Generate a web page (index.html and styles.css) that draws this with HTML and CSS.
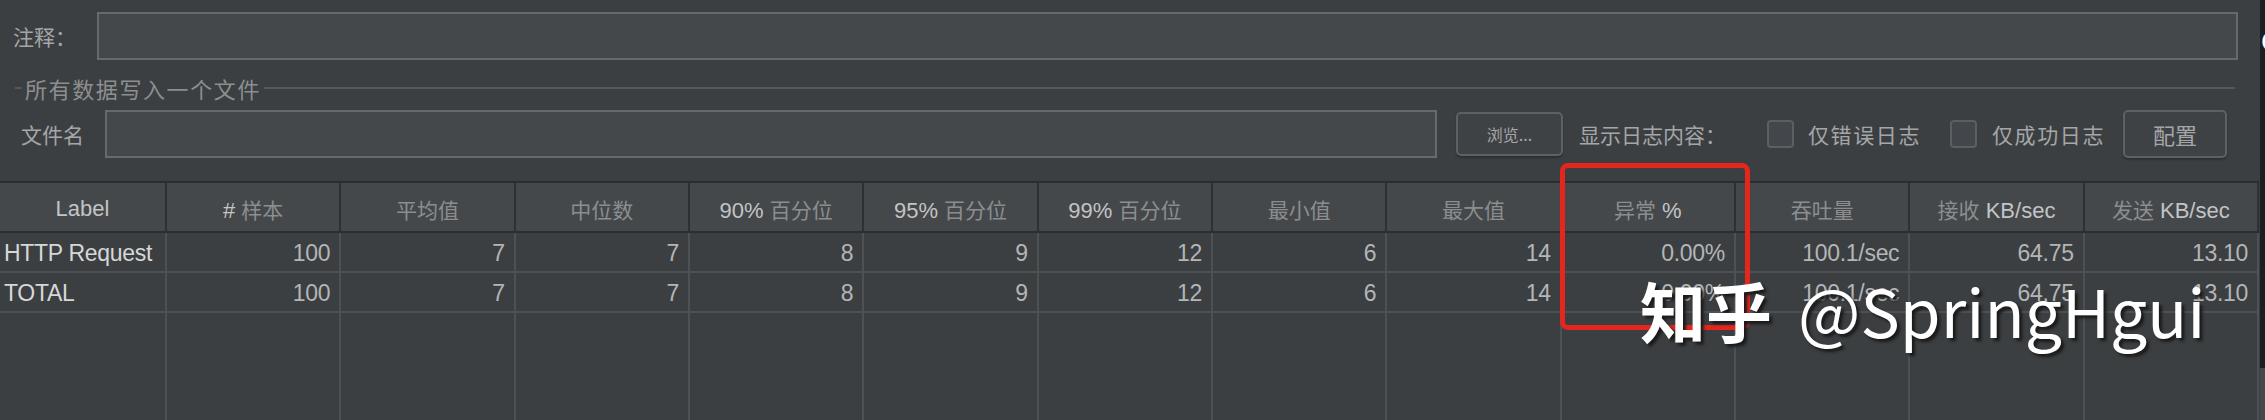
FILE: index.html
```html
<!DOCTYPE html>
<html lang="zh-CN">
<head>
<meta charset="utf-8">
<title>聚合报告</title>
<link rel="stylesheet" href="styles.css">
</head>
<body>
<div class="screen">
  <div class="app">
    <div class="comment-row">
      <span class="field-label comment-label">注释：</span>
      <div class="input comment-input"></div>
    </div>
    <div class="group-title">
      <span class="gline gline-short"></span>
      <span class="gtext">所有数据写入一个文件</span>
      <span class="gline gline-long"></span>
    </div>
    <div class="file-row">
      <span class="field-label file-label">文件名</span>
      <div class="input file-input"></div>
      <button class="btn btn-browse">浏览...</button>
      <span class="field-label log-label">显示日志内容：</span>
      <span class="check check-1"></span>
      <span class="field-label check-text check-text-1">仅错误日志</span>
      <span class="check check-2"></span>
      <span class="field-label check-text check-text-2">仅成功日志</span>
      <button class="btn btn-config">配置</button>
    </div>
    <div class="table">
      <div class="trow thead">
        <div class="cell"><span class="t">Label</span></div>
        <div class="cell"><span class="t"># <span class="cj">样本</span></span></div>
        <div class="cell"><span class="t"><span class="cj">平均值</span></span></div>
        <div class="cell"><span class="t"><span class="cj">中位数</span></span></div>
        <div class="cell"><span class="t">90% <span class="cj">百分位</span></span></div>
        <div class="cell"><span class="t">95% <span class="cj">百分位</span></span></div>
        <div class="cell"><span class="t">99% <span class="cj">百分位</span></span></div>
        <div class="cell"><span class="t"><span class="cj">最小值</span></span></div>
        <div class="cell"><span class="t"><span class="cj">最大值</span></span></div>
        <div class="cell"><span class="t"><span class="cj">异常</span> %</span></div>
        <div class="cell"><span class="t"><span class="cj">吞吐量</span></span></div>
        <div class="cell"><span class="t"><span class="cj">接收</span> KB/sec</span></div>
        <div class="cell"><span class="t"><span class="cj">发送</span> KB/sec</span></div>
      </div>
      <div class="trow tbody">
        <div class="cell name">HTTP Request</div>
        <div class="cell">100</div>
        <div class="cell">7</div>
        <div class="cell">7</div>
        <div class="cell">8</div>
        <div class="cell">9</div>
        <div class="cell">12</div>
        <div class="cell">6</div>
        <div class="cell">14</div>
        <div class="cell">0.00%</div>
        <div class="cell">100.1/sec</div>
        <div class="cell">64.75</div>
        <div class="cell">13.10</div>
      </div>
      <div class="trow tbody">
        <div class="cell name">TOTAL</div>
        <div class="cell">100</div>
        <div class="cell">7</div>
        <div class="cell">7</div>
        <div class="cell">8</div>
        <div class="cell">9</div>
        <div class="cell">12</div>
        <div class="cell">6</div>
        <div class="cell">14</div>
        <div class="cell">0.00%</div>
        <div class="cell">100.1/sec</div>
        <div class="cell">64.75</div>
        <div class="cell">13.10</div>
      </div>
      <div class="trow tfill">
        <div class="cell"></div><div class="cell"></div><div class="cell"></div><div class="cell"></div>
        <div class="cell"></div><div class="cell"></div><div class="cell"></div><div class="cell"></div>
        <div class="cell"></div><div class="cell"></div><div class="cell"></div><div class="cell"></div>
        <div class="cell"></div>
      </div>
    </div>
  </div>
  <div class="edge">
    <div class="edge-top"><span class="edge-c">C</span></div>
    <div class="edge-bottom"></div>
  </div>
  <div class="highlight"></div>
  <div class="watermark"><span class="wm-cj">知乎</span><span class="wm-id">@SpringHgui</span></div>
</div>
</body>
</html>
```

FILE: styles.css
```css
* { box-sizing: border-box; }

body {
  margin: 0;
  background: #3c3f41;
  font-family: "Liberation Sans", "Noto Sans CJK SC", sans-serif;
}

.screen {
  position: relative;
  display: flex;
  width: 2265px;
  height: 420px;
  overflow: hidden;
  background: #3c3f41;
}

.app {
  flex: none;
  width: 2260px;
  display: flex;
  flex-direction: column;
}

/* ---------- form area ---------- */
.field-label {
  font-family: "Noto Sans CJK SC", sans-serif;
  font-size: 21px;
  color: #a4a6a8;
  white-space: nowrap;
  flex: none;
}

.input {
  height: 48px;
  background: #45484a;
  border: 2px solid #676a6c;
  flex: none;
}

.comment-row {
  display: flex;
  align-items: center;
  margin-top: 12px;
  height: 48px;
}
.comment-label { width: 84px; margin-left: 13px; }
.comment-input { flex: 1; margin-right: 22px; }

.group-title {
  display: flex;
  align-items: center;
  height: 27px;
  margin: 14px 25px 0 15px;
}
.gline { height: 2px; background: #55585a; flex: none; }
.gline-short { width: 7px; }
.gline-long { flex: 1; }
.gtext {
  font-family: "Noto Sans CJK SC", sans-serif;
  font-size: 22px;
  letter-spacing: 1.6px;
  color: #8c8f91;
  margin: 0 3px 0 3px;
  white-space: nowrap;
}

.file-row {
  display: flex;
  align-items: center;
  margin-top: 9px;
  height: 48px;
}
.file-label { width: 84px; margin-left: 21px; }
.file-input { width: 1332px; }

.btn {
  flex: none;
  font-family: "Noto Sans CJK SC", sans-serif;
  color: #a4a6a8;
  background: #3f4244;
  border: 2px solid #5e6163;
  border-radius: 5px;
  padding: 0;
  box-shadow: 0 2px 2px rgba(0, 0, 0, 0.25);
}
.btn-browse {
  width: 107px;
  height: 44px;
  margin-left: 19px;
  font-size: 16px;
}
.btn-config {
  width: 104px;
  height: 48px;
  margin-left: 16px;
  font-size: 22px;
}

.log-label { width: 154px; margin-left: 16px; }
.check {
  flex: none;
  width: 27px;
  height: 28px;
  background: #43464a;
  border: 2px solid #5c5f61;
  border-radius: 4px;
}
.check-1 { margin-left: 34px; }
.check-2 { margin-left: 25px; }
.check-text { width: 117px; letter-spacing: 1.6px; }
.check-text-1 { margin-left: 14px; }
.check-text-2 { margin-left: 15px; width: 115px; }

/* ---------- table ---------- */
.table {
  margin-top: 23px;
  width: 2259px;
  height: 239px;
  display: flex;
  flex-direction: column;
}

.trow {
  display: grid;
  grid-template-columns: 167px repeat(12, 1fr);
  flex: none;
}

.cell {
  display: flex;
  align-items: center;
  border-right: 2px solid #4e5153;
  white-space: nowrap;
  overflow: hidden;
}

.thead {
  height: 52px;
  background: #45484a;
  border-top: 2px solid #2b2d2f;
  border-bottom: 2px solid #2b2d2f;
}
.thead .cell {
  justify-content: center;
  padding-top: 3px;
  border-right-color: #2e3032;
  font-size: 22px;
  color: #c2c4c6;
}
.thead .cj {
  font-family: "Noto Sans CJK SC", sans-serif;
  font-size: 21px;
  color: #8b8e90;
}

.tbody {
  height: 40px;
  border-bottom: 2px solid #4e5153;
}
.tbody .cell {
  justify-content: flex-end;
  padding-right: 9px;
  padding-top: 2px;
  font-size: 23px;
  letter-spacing: -0.3px;
  color: #b3b5b7;
}
.tbody .cell.name {
  justify-content: flex-start;
  padding-left: 4px;
  color: #d6d7d8;
}

.tfill { flex: 1; }

/* ---------- window edge ---------- */
.edge {
  flex: 1;
  display: flex;
  flex-direction: column;
  overflow: hidden;
}
.edge-top {
  height: 368px;
  background: #1d1e20;
  padding-top: 28px;
}
.edge-c {
  display: block;
  margin-left: 1px;
  font-size: 28px;
  line-height: 1;
  color: #ffffff;
}
.edge-bottom { flex: 1; background: #46494b; }

/* ---------- overlays ---------- */
.highlight {
  position: absolute;
  left: 1560px;
  top: 163px;
  width: 190px;
  height: 167px;
  border: 5px solid #e5261c;
  border-radius: 8px;
}

.watermark {
  position: absolute;
  left: 1640px;
  top: 276px;
  font-family: "Noto Sans CJK SC", sans-serif;
  font-size: 66px;
  line-height: 1;
  color: #ffffff;
  white-space: nowrap;
  text-shadow: 3px 3px 3px #1a1a1a;
}
.wm-cj { font-weight: bold; }
.wm-id { margin-left: 26px; }
```
